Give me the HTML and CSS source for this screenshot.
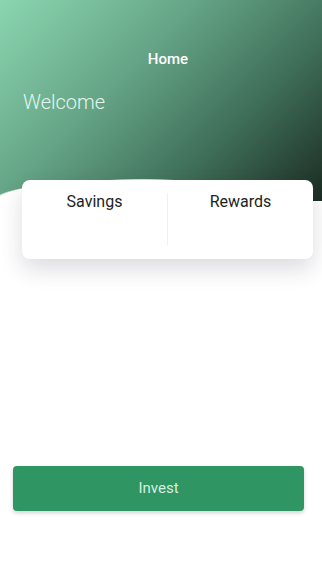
FILE: index.html
```html
<!DOCTYPE html>
<html>
<head>
<meta charset="utf-8" />
<title>Home</title>
<link rel="stylesheet" href="styles.css">
</head>
<body>
<div class="app">
	<div class="header">
		<h1 class="title">Home</h1>
		<p class="welcome">Welcome</p>
	</div>
	<div class="card">
		<div class="cell">Savings</div>
		<div class="sep"></div>
		<div class="cell">Rewards</div>
	</div>
	<div class="actions">
		<a class="btn" href="javascript:;">Invest</a>
	</div>
</div>
</body>
</html>
```
FILE: styles.css
```css
*{margin:0;padding:0;box-sizing:border-box;}
body{background:#fff;font-family:Roboto,"Noto Sans",sans-serif;}
.app{width:322px;height:573px;overflow:hidden;}

.header{height:201px;padding-top:50px;padding-left:14px;
	background:
		radial-gradient(ellipse 150px 22px at 142px 100%,#fff 97%,rgba(255,255,255,0) 100%),
		linear-gradient(135deg,#8bd6b1 0%,#65a486 38%,#40705a 68%,#1b2c22 100%);}
.title{text-align:center;font-size:15px;font-weight:500;color:#fff;line-height:18px;}
.welcome{margin:22px 0 0 9px;font-size:20px;font-weight:300;color:#e3f6ec;line-height:24px;}

.card{position:relative;display:flex;margin:-21px 9px 0 22px;height:79px;background:#fff;border-radius:8px;
	box-shadow:0 10px 22px rgba(40,40,60,0.16);padding:13px 0 14px;}
.cell{flex:1;text-align:center;font-size:16px;color:#1e1e1e;line-height:18px;}
.sep{width:1px;background:#f0f0f0;}

.actions{padding:207px 18px 0 13px;}
.btn{display:block;height:45px;line-height:45px;text-align:center;background:#2e9563;color:#d6efe1;
	font-size:15px;font-weight:400;text-decoration:none;border-radius:4px;box-shadow:0 2px 4px rgba(0,0,0,0.18);}
```
